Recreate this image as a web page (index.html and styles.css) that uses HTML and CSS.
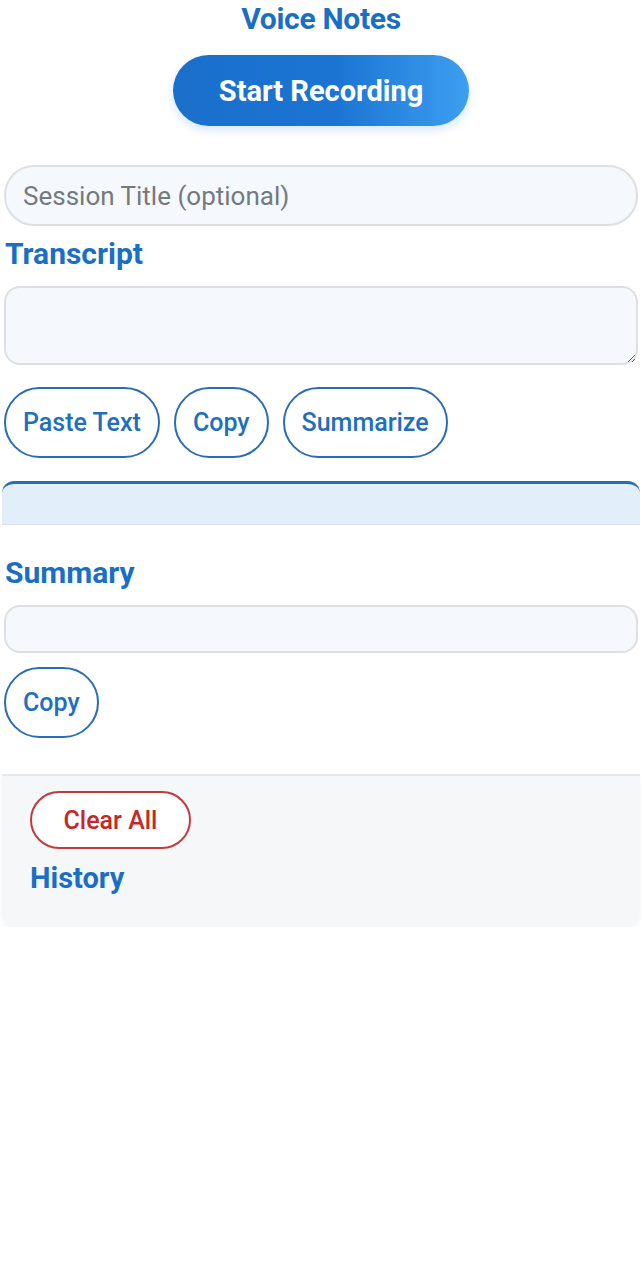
FILE: index.html
```html
<!DOCTYPE html>
<html lang="en">
<head>
<meta charset="utf-8">
<title>Voice Notes</title>
<link rel="stylesheet" href="styles.css">
</head>
<body>
<main class="app">
  <h1 class="title">Voice Notes</h1>
  <div class="record-wrap">
    <button class="record-btn">Start Recording</button>
  </div>
  <input class="field session" type="text" placeholder="Session Title (optional)">
  <h2 class="heading transcript-h">Transcript</h2>
  <textarea class="field transcript"></textarea>
  <div class="actions">
    <button class="pill">Paste Text</button>
    <button class="pill">Copy</button>
    <button class="pill">Summarize</button>
  </div>
  <div class="status"></div>
  <h2 class="heading summary-h">Summary</h2>
  <div class="field summary"></div>
  <div class="actions single">
    <button class="pill">Copy</button>
  </div>
  <section class="history">
    <button class="pill danger">Clear All</button>
    <h2 class="heading history-h">History</h2>
  </section>
</main>
</body>
</html>
```
FILE: styles.css
```css
* { box-sizing: border-box; }
html, body { margin: 0; padding: 0; background: #ffffff; }
body { font-family: Roboto, "Noto Sans", "Liberation Sans", sans-serif; }

.app {
  padding: 0 2px;
  display: flex;
  flex-direction: column;
}

.title {
  margin: 0;
  text-align: center;
  font-size: 30px;
  line-height: 38px;
  font-weight: 700;
  color: #1a6fc4;
  letter-spacing: -0.3px;
}

.record-wrap {
  display: flex;
  justify-content: center;
  margin-top: 17px;
}
.record-btn {
  width: 296px;
  height: 71px;
  border: none;
  border-radius: 36px;
  background: linear-gradient(90deg, #1a6fcb 0%, #1b74d3 55%, #3d9ff0 100%);
  color: #ffffff;
  font-family: inherit;
  font-size: 29px;
  font-weight: 700;
  box-shadow: 0 4px 10px rgba(25, 118, 210, 0.18);
}

.field {
  margin: 0 2px;
  width: calc(100% - 4px);
  background: #f5f8fc;
  border: 2px solid #dcdfe3;
  font-family: inherit;
}

.session {
  margin-top: 39px;
  height: 61px;
  border-radius: 30px;
  padding: 0 17px;
  font-size: 26px;
  color: #333;
  outline: none;
}
.session::placeholder { color: #737a80; }

.heading {
  margin: 0;
  font-size: 30px;
  line-height: 36px;
  font-weight: 700;
  color: #1a6fc4;
  padding-left: 3px;
}
.transcript-h { margin-top: 10px; }

.transcript {
  margin-top: 14px;
  height: 79px;
  border-radius: 16px;
  resize: vertical;
  display: block;
  outline: none;
}

.actions {
  display: flex;
  gap: 14px;
  margin: 22px 2px 0;
}
.pill {
  height: 71px;
  padding: 0 17px;
  border: 2px solid #2a6db5;
  border-radius: 36px;
  background: #ffffff;
  color: #1f6fbf;
  font-family: inherit;
  font-size: 25px;
  font-weight: 500;
}

.status {
  margin-top: 23px;
  height: 43px;
  background: #e2eefa;
  border-top: 3px solid #2b6db3;
  border-radius: 12px 12px 0 0;
  box-shadow: 0 1px 0 #dde3ea;
}

.summary-h { margin-top: 31px; }

.summary {
  margin-top: 14px;
  height: 48px;
  border-radius: 16px;
}

.actions.single { margin-top: 14px; }

.history {
  margin-top: 36px;
  background: #f6f7f9;
  border-top: 2px solid #e6e8eb;
  border-radius: 0 0 16px 16px;
  box-shadow: 0 3px 6px rgba(0, 0, 0, 0.05);
  padding: 15px 28px 31px;
  display: flex;
  flex-direction: column;
  align-items: flex-start;
}
.pill.danger {
  height: 58px;
  width: 161px;
  padding: 0;
  border-color: #c33a3a;
  color: #c62828;
  border-radius: 30px;
  font-size: 25px;
  font-weight: 500;
}
.history-h { margin-top: 11px; padding-left: 0; font-size: 29px; }
```
